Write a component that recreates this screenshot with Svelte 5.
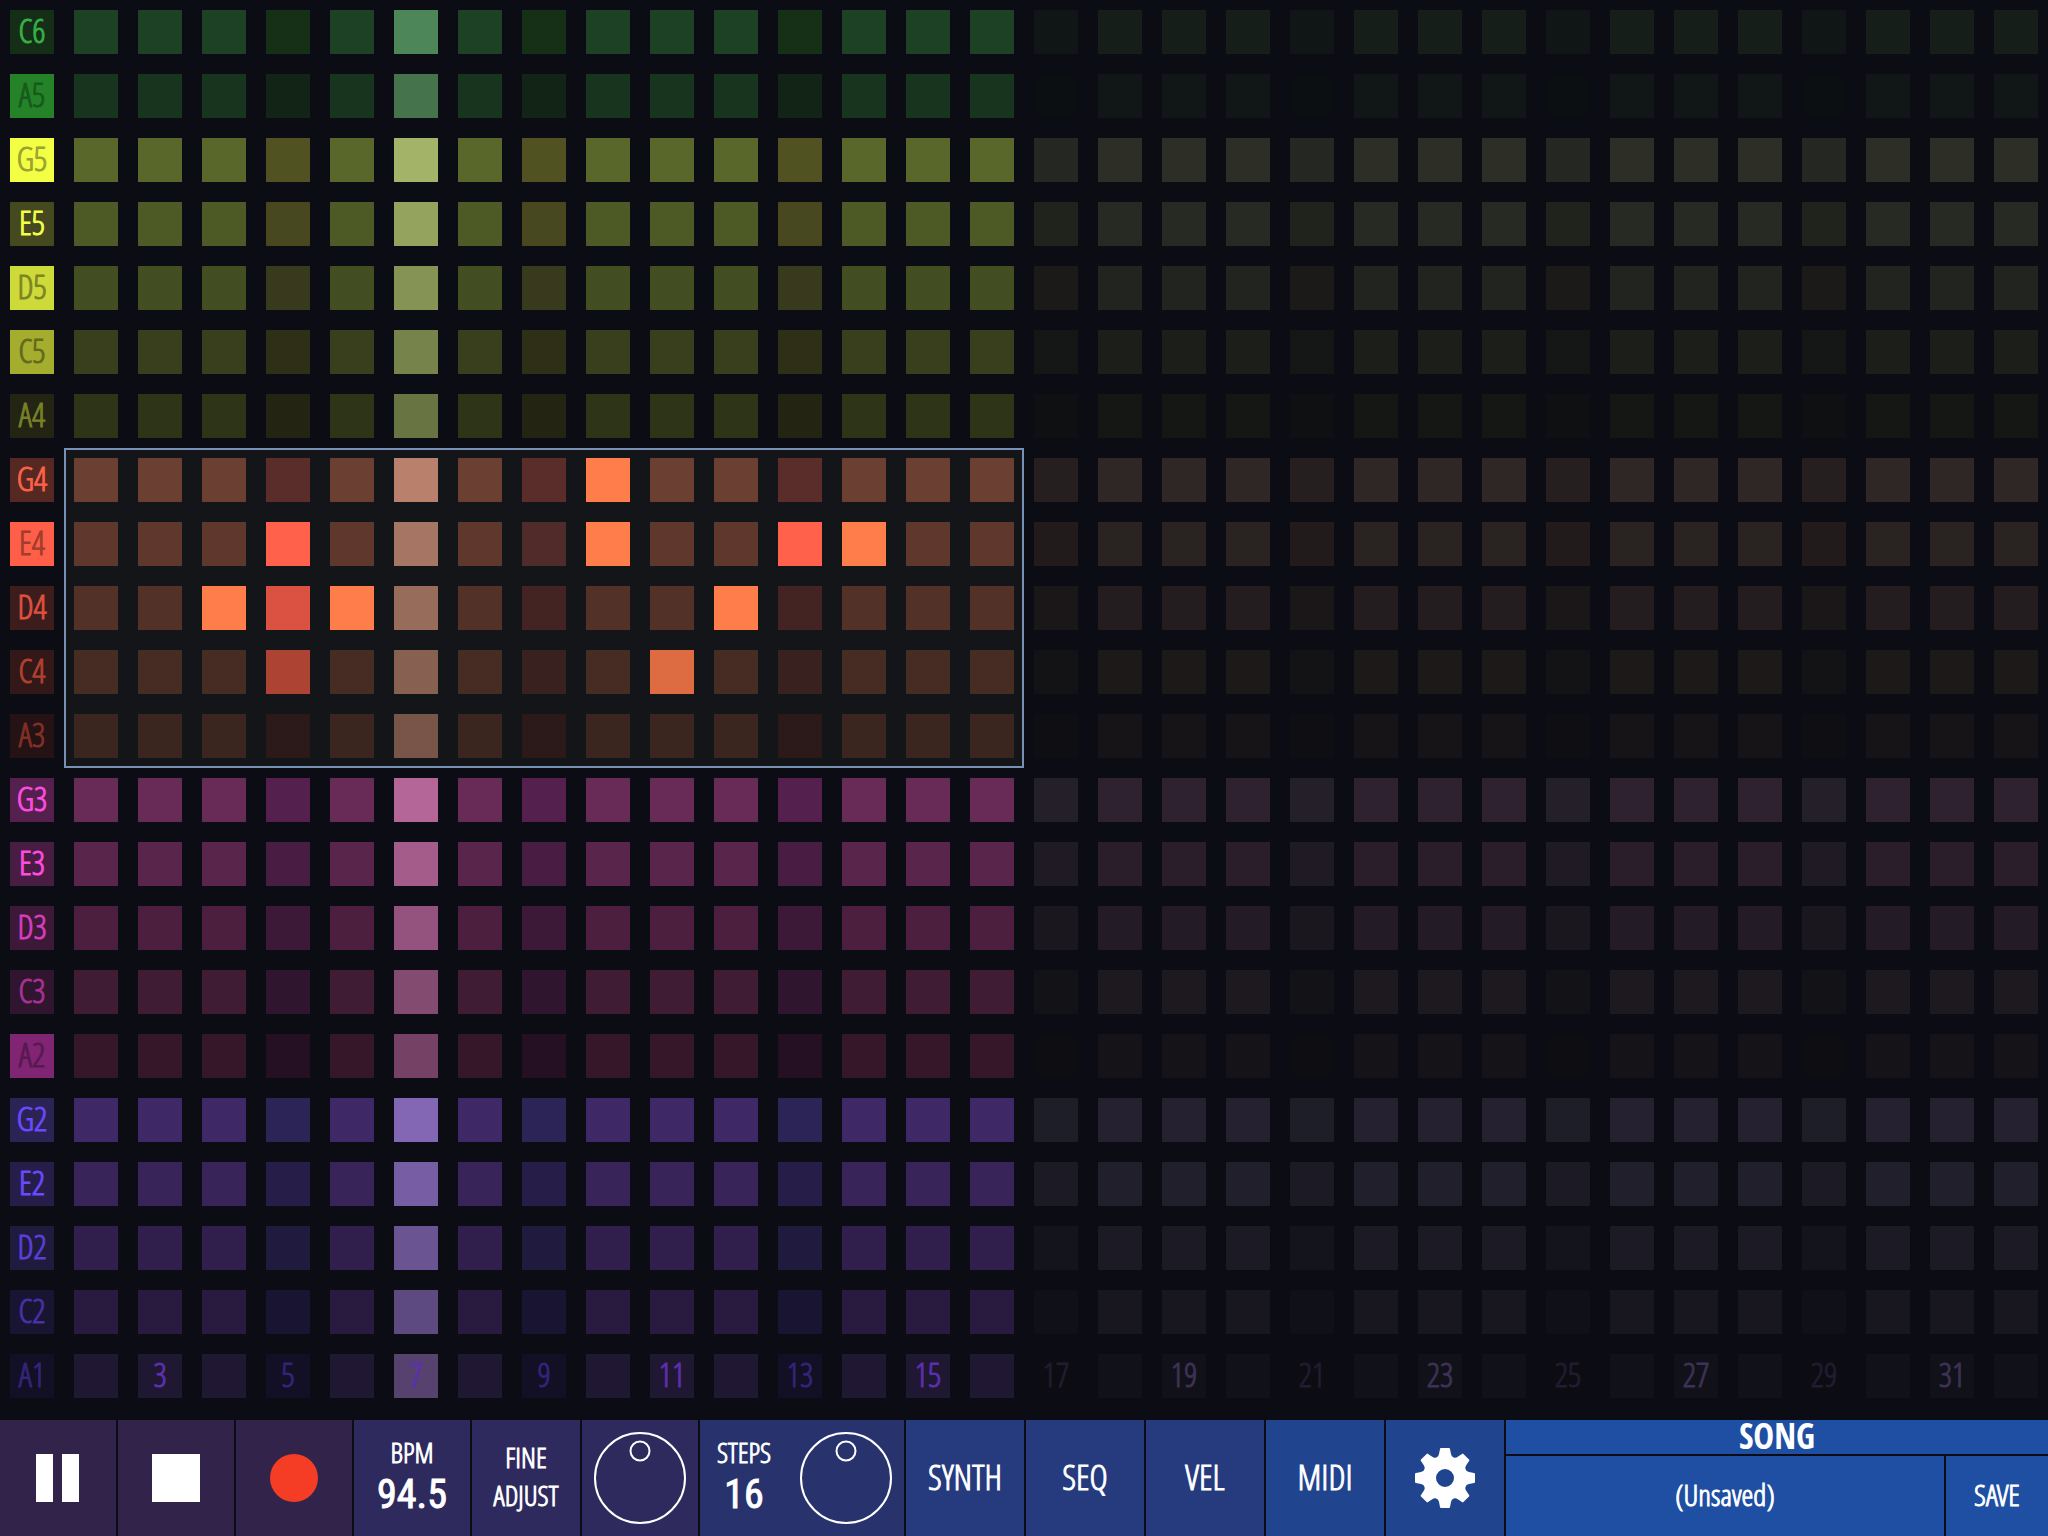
<script lang="ts">
  type Row = {
    note: string;
    key: string;
    ink: string;
    step: string;
    beat: string;
    play: string;
    off: string;
    offBeat: string;
  };

  // key/ink: note label, step/beat: active pattern, off/offBeat: past the last step
  const rows: Row[] = [
    { note: "C6", key: "#152e17", ink: "#37b044", step: "#1c4124", beat: "#162f17", play: "#4d8658", off: "#161e1a", offBeat: "#101615" },
    { note: "A5", key: "#248328", ink: "#175a1c", step: "#19341e", beat: "#112416", play: "#45734c", off: "#111716", offBeat: "#0b0f11" },
    { note: "G5", key: "#f2ff44", ink: "#9ba32f", step: "#59672a", beat: "#515222", play: "#a3b468", off: "#2d2f27", offBeat: "#252722" },
    { note: "E5", key: "#464820", ink: "#f2ff4a", step: "#4e5a25", beat: "#474720", play: "#94a45f", off: "#272923", offBeat: "#20221c" },
    { note: "D5", key: "#cdda39", ink: "#7d8423", step: "#424d21", beat: "#393a1d", play: "#859455", off: "#22241f", offBeat: "#1b1a18" },
    { note: "C5", key: "#a4ad2d", ink: "#646a1c", step: "#393f1d", beat: "#2f2f18", play: "#76844b", off: "#1c1e1a", offBeat: "#141715" },
    { note: "A4", key: "#232414", ink: "#788127", step: "#2d3418", beat: "#242413", play: "#687543", off: "#151715", offBeat: "#0f1011" },
    { note: "G4", key: "#552822", ink: "#ff6049", step: "#6c3f33", beat: "#5a2d2b", play: "#b9806b", off: "#2f2626", offBeat: "#251f20" },
    { note: "E4", key: "#ff5f48", ink: "#a43c2d", step: "#5f372c", beat: "#502b29", play: "#a77564", off: "#292322", offBeat: "#221b1c" },
    { note: "D4", key: "#3d1d1c", ink: "#df503e", step: "#523228", beat: "#432423", play: "#986c5a", off: "#231d1f", offBeat: "#1b1719" },
    { note: "C4", key: "#321817", ink: "#b24031", step: "#462c23", beat: "#38211e", play: "#886052", off: "#1d1919", offBeat: "#131315" },
    { note: "A3", key: "#251214", ink: "#803025", step: "#3a261f", beat: "#2c1a1a", play: "#785548", off: "#161416", offBeat: "#0f0f13" },
    { note: "G3", key: "#54214e", ink: "#ff4be0", step: "#682a56", beat: "#54214e", play: "#b56699", off: "#2f2230", offBeat: "#251f2a" },
    { note: "E3", key: "#491d43", ink: "#ff4be0", step: "#5a254a", beat: "#491d43", play: "#a45c8b", off: "#291e2a", offBeat: "#201a24" },
    { note: "D3", key: "#3b1937", ink: "#d63dbd", step: "#4d1f3f", beat: "#3b1937", play: "#94537e", off: "#231c27", offBeat: "#1b171f" },
    { note: "C3", key: "#30152e", ink: "#a83194", step: "#401b34", beat: "#30152e", play: "#844b70", off: "#1e191e", offBeat: "#131216" },
    { note: "A2", key: "#812473", ink: "#571950", step: "#351729", beat: "#241022", play: "#754164", off: "#151317", offBeat: "#0e0e12" },
    { note: "G2", key: "#2c2355", ink: "#6a4aff", step: "#3f2866", beat: "#2c2356", play: "#8467b4", off: "#262131", offBeat: "#1e1e28" },
    { note: "E2", key: "#261e49", ink: "#6a4aff", step: "#39245a", beat: "#261e49", play: "#775da3", off: "#211f2c", offBeat: "#1c1a24" },
    { note: "D2", key: "#1f1a3e", ink: "#5a40d6", step: "#301f4c", beat: "#1f1a3e", play: "#6b5492", off: "#1c1a25", offBeat: "#14141c" },
    { note: "C2", key: "#181431", ink: "#4831a5", step: "#291a40", beat: "#181431", play: "#5d4a80", off: "#18161f", offBeat: "#101018" },
    { note: "A1", key: "#130f25", ink: "#34247a", step: "#201733", beat: "#130f25", play: "#56416f", off: "#111119", offBeat: "#0c0c12" }
  ];

  const columns = Array.from({ length: 31 }, (_, i) => i + 2);
  const steps = 16;
  const playhead = 7;

  let active = $state<Record<string, string>>({
    "G4-10": "#ff7d4b",
    "E4-5": "#ff614b",
    "E4-10": "#ff7d4b",
    "E4-13": "#ff614b",
    "E4-14": "#ff7d4b",
    "D4-4": "#ff7d4b",
    "D4-5": "#db5242",
    "D4-6": "#ff7d4b",
    "D4-12": "#ff7d4b",
    "C4-5": "#ad4333",
    "C4-11": "#de6c42"
  });

  let fineAdjust = $state(0);
  let stepKnob = $state(0);

  const isBeat = (col: number) => col % 4 === 1;

  function fill(row: Row, col: number) {
    const on = active[`${row.note}-${col}`];
    if (on) return on;
    if (col === playhead) return row.play;
    if (col > steps) return isBeat(col) ? row.offBeat : row.off;
    return isBeat(col) ? row.beat : row.step;
  }

  function numberColor(col: number) {
    if (col > steps) return isBeat(col) ? "#201d30" : "#3e3155";
    return isBeat(col) ? "#33247a" : "#5c30ae";
  }

  function toggle(row: Row, col: number) {
    const id = `${row.note}-${col}`;
    if (active[id]) {
      delete active[id];
    } else {
      active[id] = row.ink;
    }
  }
</script>

{#snippet dial()}
  <svg viewBox="0 0 92 92" aria-hidden="true">
    <circle cx="46" cy="46" r="45" />
    <circle cx="46" cy="19" r="9.5" />
  </svg>
{/snippet}

<main class="app">
  <div class="grid">
    <div class="selection"></div>
    {#each rows as row, r}
      <button type="button" class="cell" style="background: {row.key}; color: {row.ink}">{row.note}</button>
      {#each columns as col}
        <button
          type="button"
          class="cell"
          aria-label="{row.note} step {col}"
          style="background: {fill(row, col)}; color: {numberColor(col)}"
          onclick={() => toggle(row, col)}
        >{#if r === rows.length - 1 && col % 2 === 1}{col}{/if}</button>
      {/each}
    {/each}
  </div>

  <div class="toolbar">
    <button type="button" class="transport" aria-label="Pause">
      <svg class="icon" viewBox="0 0 48 48"><path d="M2 0h17v48H2zM28 0h17v48H28z" /></svg>
    </button>
    <button type="button" class="transport" aria-label="Stop">
      <svg class="icon" viewBox="0 0 48 48"><path d="M0 0h48v48H0z" /></svg>
    </button>
    <button type="button" class="transport" aria-label="Record">
      <svg class="icon record" viewBox="0 0 48 48"><circle cx="24" cy="24" r="24" /></svg>
    </button>
    <button type="button" class="tempo readout">
      <span class="caption">BPM</span>
      <span class="value">94.5</span>
    </button>
    <button type="button" class="tempo fine">FINE<br />ADJUST</button>
    <label class="tempo knob">
      {@render dial()}
      <input type="range" min="-50" max="50" aria-label="Fine adjust" bind:value={fineAdjust} />
    </label>
    <div class="steps">
      <div class="readout">
        <span class="caption">STEPS</span>
        <span class="value">{steps}</span>
      </div>
      <label class="knob">
        {@render dial()}
        <input type="range" min="-16" max="16" aria-label="Steps" bind:value={stepKnob} />
      </label>
    </div>
    <button type="button" class="tab">SYNTH</button>
    <button type="button" class="tab">SEQ</button>
    <button type="button" class="tab">VEL</button>
    <button type="button" class="tab setup">MIDI</button>
    <button type="button" class="setup" aria-label="Settings">
      <svg class="gear" viewBox="-30 -30 60 60">
        <path fill-rule="evenodd" d="M0-22A22 22 0 0 1 0 22A22 22 0 0 1 0-22ZM0-9A9 9 0 0 0 0 9A9 9 0 0 0 0-9Z" />
        {#each [0, 45, 90, 135, 180, 225, 270, 315] as angle}
          <path transform="rotate({angle})" d="M-4-30H4Q5-30 5-29L6-24Q6-22 9-20L7-16H-7L-9-20Q-6-22-6-24L-5-29Q-5-30-4-30Z" />
        {/each}
      </svg>
    </button>
    <div class="song">
      <button type="button" class="song-title">SONG</button>
      <button type="button" class="song-name">(Unsaved)</button>
      <button type="button" class="song-save">SAVE</button>
    </div>
  </div>
</main>

<style>
  :global(body) {
    margin: 0;
    background: #0c0c14;
  }

  .app {
    font-family: "Open Sans Condensed Light", "Roboto Condensed", "Open Sans", sans-serif;
    color: #fff;
    /* the light cut is too thin on the dark cells */
    -webkit-text-stroke: 1px currentColor;
  }

  button {
    margin: 0;
    padding: 0;
    border: none;
    border-radius: 0;
    background: none;
    color: inherit;
    font: inherit;
    cursor: pointer;
  }

  .grid {
    position: relative;
    display: grid;
    grid-template-columns: repeat(32, minmax(0, 1fr));
    gap: 20px;
    padding: 10px 10px 22px;
  }

  .cell {
    position: relative;
    box-sizing: border-box;
    display: flex;
    align-items: center;
    justify-content: center;
    aspect-ratio: 1;
    padding-bottom: 2px;
    font-size: 33px;
    line-height: 42px;
  }

  .selection {
    position: absolute;
    grid-area: 8 / 2 / 13 / 17;
    inset: -10px;
    border: 2px solid #7890b4;
    background: #131519;
  }

  .toolbar {
    display: grid;
    grid-template-columns:
      repeat(4, minmax(0, 116fr)) minmax(0, 108fr) minmax(0, 116fr) minmax(0, 204fr)
      repeat(5, minmax(0, 118fr)) minmax(0, 542fr);
    gap: 2px;
    height: 116px;
  }

  .transport {
    display: flex;
    align-items: center;
    justify-content: center;
    background: #32234b;
  }

  .icon {
    width: 48px;
    height: 48px;
    fill: #fff;
  }

  .record {
    fill: #f53d25;
  }

  .tempo {
    background: #2e2a5d;
  }

  .readout {
    display: flex;
    flex-direction: column;
    align-items: center;
    justify-content: center;
    padding-bottom: 4px;
  }

  .caption {
    font-size: 28px;
    line-height: 38px;
  }

  .value {
    font-family: "Roboto Condensed", Roboto, sans-serif;
    font-size: 40px;
    line-height: 48px;
  }

  .fine {
    padding-bottom: 4px;
    font-size: 28px;
    line-height: 38px;
  }

  .knob {
    position: relative;
    display: flex;
    align-items: center;
    justify-content: center;
  }

  .knob svg {
    width: 92px;
    height: 92px;
    fill: none;
    stroke: #fff;
    stroke-width: 2;
  }

  .knob input {
    position: absolute;
    inset: 0;
    width: 100%;
    height: 100%;
    margin: 0;
    opacity: 0;
    cursor: pointer;
  }

  .steps {
    display: grid;
    grid-template-columns: 88fr 116fr;
    background: #28336e;
  }

  .tab {
    padding-bottom: 2px;
    background: #253b7e;
    font-size: 35px;
    line-height: 42px;
  }

  .setup {
    background: #20458e;
  }

  .gear {
    display: block;
    width: 60px;
    height: 60px;
    margin: 0 auto;
    fill: #fff;
  }

  .song {
    display: grid;
    grid-template-columns: minmax(0, 1fr) 102px;
    grid-template-rows: 34px 1fr;
    gap: 2px;
  }

  .song button {
    padding-bottom: 2px;
    background: #1e4fa3;
    font-size: 30px;
    line-height: 38px;
  }

  .song .song-title {
    grid-column: 1 / -1;
    font-family: "Open Sans Condensed", "Roboto Condensed", "Open Sans", sans-serif;
    font-size: 35px;
    font-weight: bold;
    line-height: 32px;
    -webkit-text-stroke: 0;
  }
</style>
